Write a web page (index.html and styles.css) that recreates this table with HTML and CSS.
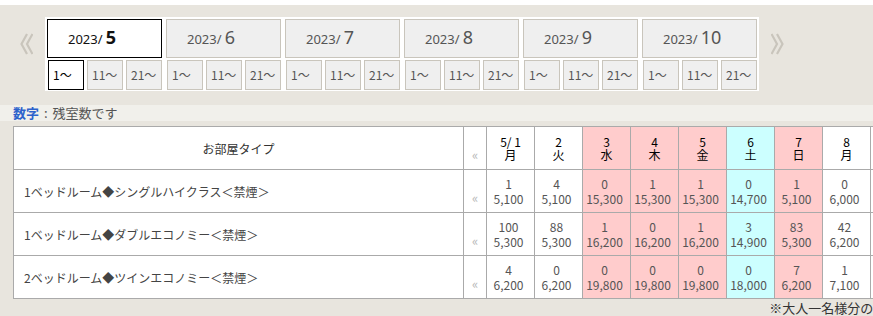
FILE: index.html
```html
<!DOCTYPE html>
<html lang="ja">
<head>
<meta charset="utf-8">
<title>空室カレンダー</title>
<link rel="stylesheet" href="styles.css">
</head>
<body>
<div class="topbar"></div>

<div class="nav">
  <a class="nav-arrow" href="#" aria-label="前へ">
    <svg width="13" height="22" viewBox="0 0 13 22"><path d="M7 1 L1.5 11 L7 21 M12.5 1 L7 11 L12.5 21" fill="none" stroke="#c9c5bc" stroke-width="2.2"/></svg>
  </a>
  <div class="months">
    <div class="month">
      <div class="month-tab is-current"><span class="yr">2023/</span> <span class="mo">5</span></div>
      <div class="terms"><span class="term is-current">1〜</span><span class="term">11〜</span><span class="term">21〜</span></div>
    </div>
    <div class="month">
      <div class="month-tab"><span class="yr">2023/</span> <span class="mo">6</span></div>
      <div class="terms"><span class="term">1〜</span><span class="term">11〜</span><span class="term">21〜</span></div>
    </div>
    <div class="month">
      <div class="month-tab"><span class="yr">2023/</span> <span class="mo">7</span></div>
      <div class="terms"><span class="term">1〜</span><span class="term">11〜</span><span class="term">21〜</span></div>
    </div>
    <div class="month">
      <div class="month-tab"><span class="yr">2023/</span> <span class="mo">8</span></div>
      <div class="terms"><span class="term">1〜</span><span class="term">11〜</span><span class="term">21〜</span></div>
    </div>
    <div class="month">
      <div class="month-tab"><span class="yr">2023/</span> <span class="mo">9</span></div>
      <div class="terms"><span class="term">1〜</span><span class="term">11〜</span><span class="term">21〜</span></div>
    </div>
    <div class="month">
      <div class="month-tab"><span class="yr">2023/</span> <span class="mo">10</span></div>
      <div class="terms"><span class="term">1〜</span><span class="term">11〜</span><span class="term">21〜</span></div>
    </div>
  </div>
  <a class="nav-arrow" href="#" aria-label="次へ">
    <svg width="13" height="22" viewBox="0 0 13 22"><path d="M6 1 L11.5 11 L6 21 M0.5 1 L6 11 L0.5 21" fill="none" stroke="#c9c5bc" stroke-width="2.2"/></svg>
  </a>
</div>

<p class="legend"><b>数字</b> : 残室数です</p>

<div class="sheet">
  <table class="vacancy">
    <colgroup>
      <col class="c-room"><col class="c-arrow">
      <col class="c-day"><col class="c-day"><col class="c-day"><col class="c-day"><col class="c-day">
      <col class="c-day"><col class="c-day"><col class="c-day"><col class="c-day"><col class="c-day">
      <col class="c-arrow">
    </colgroup>
    <thead>
      <tr>
        <th class="room-head">お部屋タイプ</th>
        <th class="arrow">«</th>
        <th class="day">5/ 1<br>月</th>
        <th class="day">2<br>火</th>
        <th class="day holiday">3<br>水</th>
        <th class="day holiday">4<br>木</th>
        <th class="day holiday">5<br>金</th>
        <th class="day sat">6<br>土</th>
        <th class="day holiday">7<br>日</th>
        <th class="day">8<br>月</th>
        <th class="day">9<br>火</th>
        <th class="day">10<br>水</th>
        <th class="arrow">»</th>
      </tr>
    </thead>
    <tbody>
      <tr>
        <td class="room">1ベッドルーム◆シングルハイクラス＜禁煙＞</td>
        <td class="arrow">«</td>
        <td class="cell">1<br>5,100</td>
        <td class="cell">4<br>5,100</td>
        <td class="cell holiday">0<br>15,300</td>
        <td class="cell holiday">1<br>15,300</td>
        <td class="cell holiday">1<br>15,300</td>
        <td class="cell sat">0<br>14,700</td>
        <td class="cell holiday">1<br>5,100</td>
        <td class="cell">0<br>6,000</td>
        <td class="cell">2<br>6,000</td>
        <td class="cell">3<br>6,000</td>
        <td class="arrow">»</td>
      </tr>
      <tr>
        <td class="room">1ベッドルーム◆ダブルエコノミー＜禁煙＞</td>
        <td class="arrow">«</td>
        <td class="cell">100<br>5,300</td>
        <td class="cell">88<br>5,300</td>
        <td class="cell holiday">1<br>16,200</td>
        <td class="cell holiday">0<br>16,200</td>
        <td class="cell holiday">1<br>16,200</td>
        <td class="cell sat">3<br>14,900</td>
        <td class="cell holiday">83<br>5,300</td>
        <td class="cell">42<br>6,200</td>
        <td class="cell">60<br>6,200</td>
        <td class="cell">71<br>6,200</td>
        <td class="arrow">»</td>
      </tr>
      <tr>
        <td class="room">2ベッドルーム◆ツインエコノミー＜禁煙＞</td>
        <td class="arrow">«</td>
        <td class="cell">4<br>6,200</td>
        <td class="cell">0<br>6,200</td>
        <td class="cell holiday">0<br>19,800</td>
        <td class="cell holiday">0<br>19,800</td>
        <td class="cell holiday">0<br>19,800</td>
        <td class="cell sat">0<br>18,000</td>
        <td class="cell holiday">7<br>6,200</td>
        <td class="cell">1<br>7,100</td>
        <td class="cell">3<br>7,100</td>
        <td class="cell">5<br>7,100</td>
        <td class="arrow">»</td>
      </tr>
    </tbody>
  </table>
  <p class="note">※大人一名様分の料金（税込）です。</p>
</div>
</body>
</html>
```

FILE: styles.css
```css
html, body {
  margin: 0;
  padding: 0;
  overflow: hidden;
}

body {
  background: #e8e5de;
  font-family: "Noto Sans CJK JP", "Noto Sans", sans-serif;
  font-size: 12px;
  color: #444;
}

.topbar {
  height: 5px;
  background: #fff;
}

/* month / term navigation */
.nav {
  display: flex;
  align-items: flex-start;
  padding: 12px 0 14px 20px;
}

.nav-arrow {
  display: block;
  width: 13px;
  height: 22px;
  margin-top: 16px;
}

.nav-arrow svg {
  display: block;
}

.months {
  display: grid;
  grid-template-columns: repeat(6, 115px);
  column-gap: 4px;
  background: #fff;
  padding: 2px 2px 1px 2px;
  margin: 0 12px;
}

.month-tab {
  box-sizing: border-box;
  height: 39px;
  border: 1px solid #c9c5bc;
  background: #efefef;
  padding-left: 20px;
  line-height: 34px;
  color: #555;
  font-family: "Noto Sans", sans-serif;
  white-space: nowrap;
}

.month-tab .yr {
  font-size: 13px;
}

.month-tab .mo {
  font-size: 18px;
}

.month-tab.is-current {
  background: #fff;
  border-color: #000;
  color: #111;
}

.month-tab.is-current .mo {
  font-weight: bold;
}

.terms {
  display: flex;
  gap: 3px;
  margin-top: 2px;
  padding-left: 1px;
}

.term {
  box-sizing: border-box;
  width: 36px;
  height: 30px;
  border: 1px solid #c9c5bc;
  background: #efefef;
  padding-left: 4px;
  line-height: 28px;
  color: #555;
  white-space: nowrap;
}

.term.is-current {
  background: #fff;
  border-color: #000;
  color: #000;
}

/* legend line */
.legend {
  margin: 0;
  height: 16px;
  line-height: 16px;
  padding-left: 13px;
  background: #f1f0eb;
  font-size: 13px;
  color: #555;
  word-spacing: 2px;
}

.legend b {
  color: #2d62cc;
}

/* vacancy table */
.sheet {
  width: 976px;
  margin: 5px 0 0 13px;
}

.vacancy {
  table-layout: fixed;
  width: 976px;
  border-collapse: collapse;
  background: #fff;
}

.c-room { width: 450px; }
.c-arrow { width: 23px; }
.c-day { width: 48px; }

.vacancy tr {
  height: 43px;
}

.vacancy th,
.vacancy td {
  border: 1px solid #aaa;
  padding: 0;
  font-weight: normal;
  text-align: center;
  vertical-align: middle;
}

.room-head {
  color: #333;
}

.vacancy .room {
  text-align: left;
  padding-left: 10px;
  color: #444;
  white-space: nowrap;
}

.vacancy .arrow {
  color: #b8b8b8;
  font-size: 13px;
  line-height: 14px;
  padding-top: 14px;
}

.day {
  color: #000;
  line-height: 13px;
}

.vacancy .cell {
  color: #555;
  line-height: 15px;
  padding-right: 4px;
}

.holiday {
  background: #ffcccc;
}

.sat {
  background: #ccffff;
}

.note {
  margin: 0;
  text-align: right;
  font-size: 13px;
  line-height: 17px;
  color: #333;
}
```
